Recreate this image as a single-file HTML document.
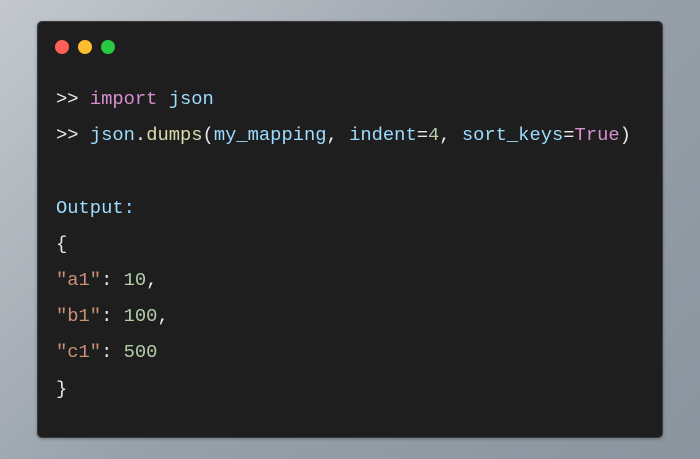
<!DOCTYPE html>
<html><head><style>
html,body{margin:0;padding:0}
body{width:700px;height:459px;overflow:hidden;background:linear-gradient(135deg,#c3c8cd 0%,#98a1aa 50%,#8a949e 100%);position:relative}
.win{position:absolute;left:37px;top:21px;width:624px;height:415px;background:#1e1e1e;border-radius:5px;border:1px solid #3a3d40;box-shadow:0 1px 3px rgba(0,0,0,.3)}
.dot{position:absolute;top:18px;width:14px;height:14px;border-radius:50%}
pre{position:absolute;left:18px;top:59px;margin:0;font-family:"Liberation Mono",monospace;font-size:18.8px;line-height:36.2px;color:#e8e8e8}
.k{color:#d78fd1}.v{color:#9cdcfe}.f{color:#dcdcaa}.s{color:#ce9178}.n{color:#b5cea8}
</style></head><body>
<div class="win">
<div class="dot" style="left:17px;background:#fe5f57"></div>
<div class="dot" style="left:40px;background:#febc2e"></div>
<div class="dot" style="left:63px;background:#28c840"></div>
<pre>&gt;&gt; <span class="k">import</span> <span class="v">json</span>
&gt;&gt; <span class="v">json</span>.<span class="f">dumps</span>(<span class="v">my_mapping</span>, <span class="v">indent</span>=<span class="n">4</span>, <span class="v">sort_keys</span>=<span class="k">True</span>)

<span class="v">Output:</span>
{
<span class="s">"a1"</span>: <span class="n">10</span>,
<span class="s">"b1"</span>: <span class="n">100</span>,
<span class="s">"c1"</span>: <span class="n">500</span>
}</pre>
</div>
</body></html>
